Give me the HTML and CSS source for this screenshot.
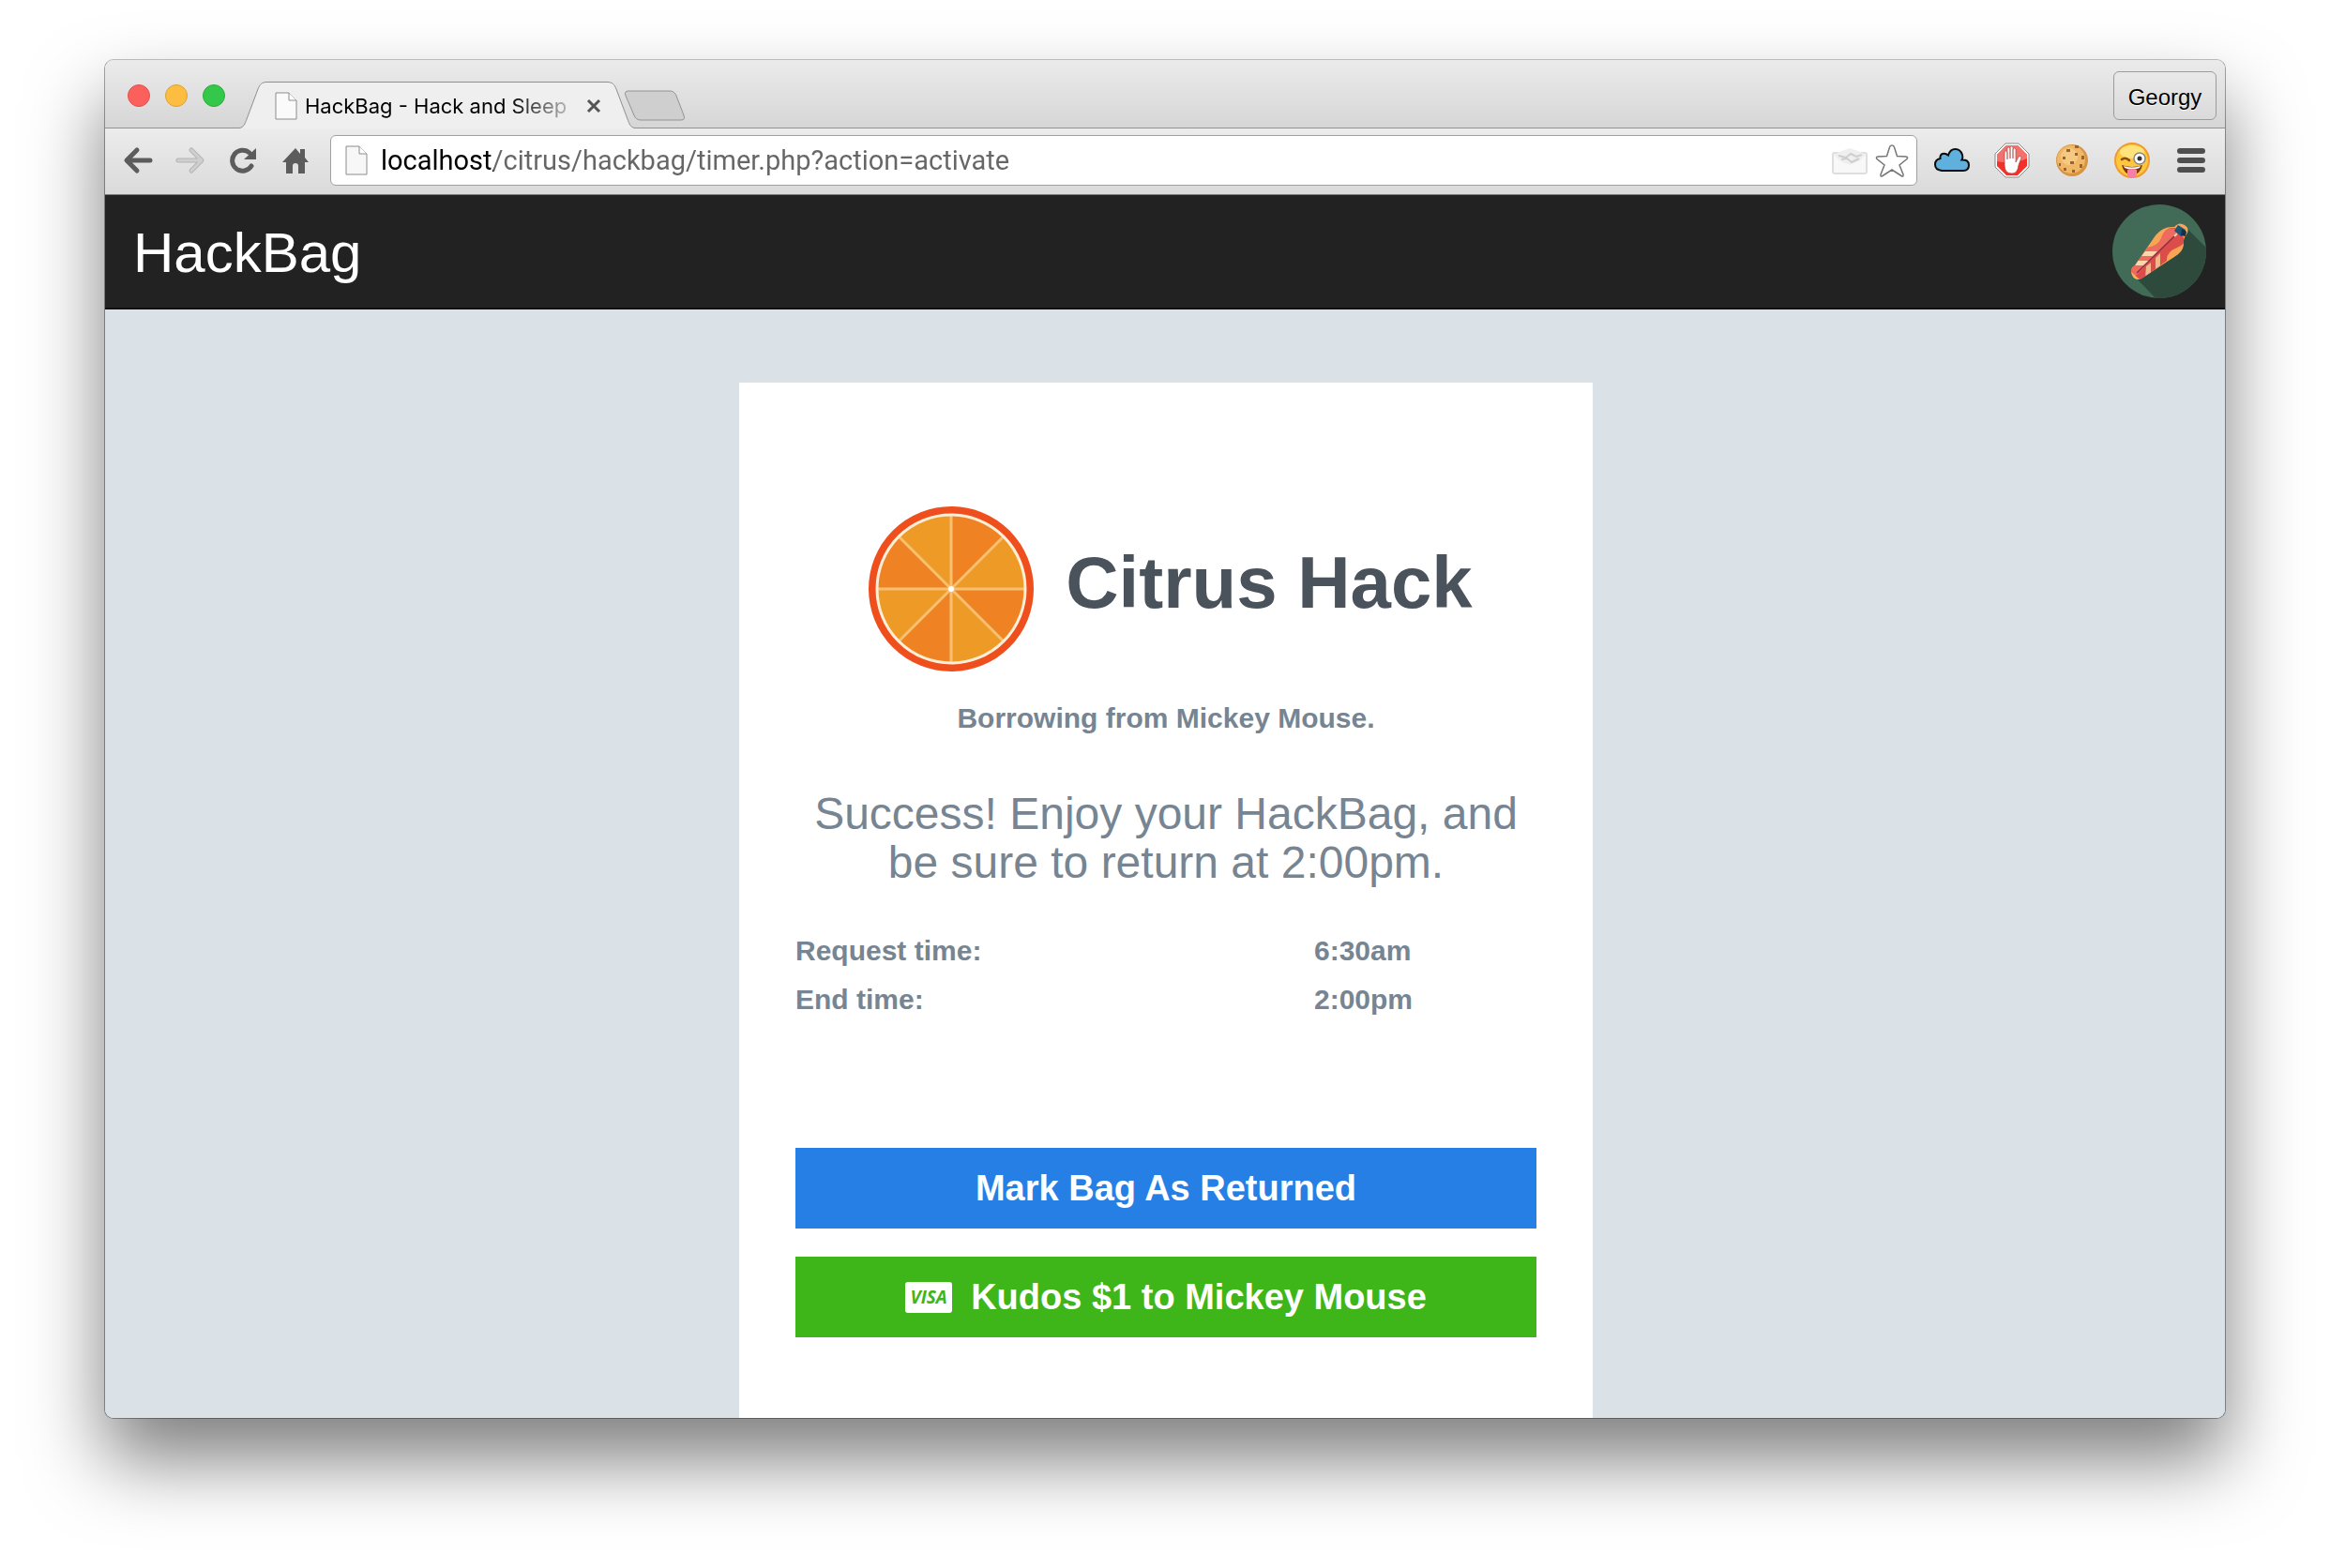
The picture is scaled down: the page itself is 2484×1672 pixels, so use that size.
FILE: index.html
```html
<!doctype html>
<html lang="en">
<head>
  <meta charset="utf-8">
  <meta name="viewport" content="width=device-width,initial-scale=1">
  <title>HackBag - Hack and Sleep</title>
  <link rel="stylesheet" href="styles.css">
</head>
<body>
  <div class="window">

    <!-- tab strip -->
    <div class="tabstrip">
      <div class="lights">
        <button type="button" class="light red" aria-label="Close window"></button>
        <button type="button" class="light yellow" aria-label="Minimize window"></button>
        <button type="button" class="light green" aria-label="Zoom window"></button>
      </div>
      <div class="tab">
        <svg class="tab-edge" width="30" height="50" viewBox="0 0 30 50">
          <path d="M0 50 V49.500 C5 49 6 45 8 40 L20 8 C22 3 24 .5 30 .5 V50z" fill="#efefef"/>
          <path d="M0 49.500 C5 49 6 45 8 40 L20 8 C22 3 24 .5 30 .5" fill="none" stroke="#8f8f8f"/>
        </svg>
        <div class="tab-body">
          <svg width="24" height="30" viewBox="0 0 24 30">
            <path d="M1 1h14l8 8v20H1z" fill="#fafafa" stroke="#8c8c8c"/>
            <path d="M15 1v8h8" fill="#fff" stroke="#8c8c8c"/>
          </svg>
          <span class="tab-title">HackBag - Hack and Sleep</span>
          <button type="button" class="tab-close" aria-label="Close tab">
            <svg width="16" height="16" viewBox="0 0 16 16"><path d="M2 2l12 12M14 2L2 14" stroke="#555" stroke-width="3"/></svg>
          </button>
        </div>
        <svg class="tab-edge" width="30" height="50" viewBox="0 0 30 50">
          <path d="M30 50 V49.500 C25 49 24 45 22 40 L10 8 C8 3 6 .5 0 .5 V50z" fill="#efefef"/>
          <path d="M30 49.500 C25 49 24 45 22 40 L10 8 C8 3 6 .5 0 .5" fill="none" stroke="#8f8f8f"/>
        </svg>
      </div>
      <button type="button" class="new-tab" aria-label="New tab">
        <svg width="66" height="34" viewBox="0 0 66 34">
          <path d="M5 1H49Q54 1 56 6L64 27Q66 32 61 32H18Q13 32 11 27L2 6Q0 1 5 1z" fill="#cfcfcf" stroke="#929292"/>
        </svg>
      </button>
      <button type="button" class="profile">Georgy</button>
    </div>

    <!-- toolbar -->
    <div class="toolbar">
      <button type="button" class="tool" aria-label="Back">
        <svg width="32" height="30" viewBox="0 0 32 30"><path d="M15 4L4 15l11 11M5 15h24" fill="none" stroke="#5c5c5c" stroke-width="5" stroke-linecap="round" stroke-linejoin="round"/></svg>
      </button>
      <button type="button" class="tool" aria-label="Forward">
        <svg width="32" height="30" viewBox="0 0 32 30"><path d="M17 4l11 11-11 11M27 15H3" fill="none" stroke="#b4b4b4" stroke-width="5" stroke-linecap="round" stroke-linejoin="round"/><path d="M17 4l11 11-11 11M27 15H3" fill="none" stroke="#cfcfcf" stroke-width="3" stroke-linecap="round" stroke-linejoin="round"/></svg>
      </button>
      <button type="button" class="tool" aria-label="Reload">
        <svg width="32" height="30" viewBox="0 0 32 30"><path d="M25 21A11 11 0 1 1 23 7" fill="none" stroke="#5c5c5c" stroke-width="5" stroke-linecap="round"/><path d="M30 2V14H17z" fill="#5c5c5c"/></svg>
      </button>
      <button type="button" class="tool" aria-label="Home">
        <svg width="32" height="30" viewBox="0 0 32 30"><path d="M16 2l5 6V3h5v9l4 5h-4v12h-7v-8q0-3-3-3t-3 3v8H6V17H2z" fill="#5c5c5c"/></svg>
      </button>

      <div class="omnibox">
        <svg width="24" height="32" viewBox="0 0 24 32">
          <path d="M1 1h14l8 8v22H1z" fill="#f7f7f7" stroke="#8c8c8c"/>
          <path d="M15 1v8h8" fill="#fff" stroke="#8c8c8c"/>
        </svg>
        <input class="url" type="text" aria-label="Address" value="localhost/citrus/hackbag/timer.php?action=activate">
        <svg width="38" height="30" viewBox="0 0 38 30">
          <rect x="1" y="7" width="36" height="22" rx="2" fill="#f8f8f8" stroke="#dedede" stroke-width="2"/>
          <path d="M2 9l8-4 9-3 9 3 8 4-7 7-10 4-10-4z" fill="#efefef"/>
          <path d="M7 10l8 2 5-4 6 3 6-2M10 14l6-1 5 4 8-4" fill="none" stroke="#cecece" stroke-width="2"/>
        </svg>
        <svg width="36" height="36" viewBox="0 0 36 36">
          <path d="M18 2q2 0 2.500 2l3 9.500 9.500.5q2.500.5 1 2.500l-8 6.500 4 10q.5 3-2 1.500L18 28l-10 6.500q-2.500 1.500-2-1.500l4-10-8-6.500q-1.500-2 1-2.500l9.500-.5 3-9.500Q16 2 18 2z" fill="#fff" stroke="#777" stroke-width="1.500"/>
        </svg>
      </div>

      <div class="extensions">
        <button type="button" class="ext" aria-label="Cloud">
          <svg width="38" height="38" viewBox="0 0 38 38"><path d="M8 30Q1 29 1 23.500T6.500 17Q6 13 9 12T15 13.500Q17 7 22.500 7T30 13Q31 16 29.500 18.500Q37 18 37 24T31 30z" fill="#5fb0dc" stroke="#0a0a0a" stroke-width="2"/></svg>
        </button>
        <button type="button" class="ext" aria-label="Ad blocker">
          <svg width="38" height="38" viewBox="0 0 38 38">
            <path d="M12 1h14l11 11v14L26 37H12L1 26V12z" fill="#fff" stroke="#8a8a8a"/>
            <path d="M13 3h12l10 10v12L25 35H13L3 25V13z" fill="#f0322a"/>
            <path d="M13 3h12l10 10v4Q20 24 3 20v-7z" fill="#f4706a"/>
            <path d="M11 20V10q1.500-2 3 0v8V6q1.500-2 3 0v11V5q1.500-2 3 0v12V7q1.500-2 3 0v14l3-6q3-1 3 1l-3 8q-1 9-7 9-8 0-8-9z" fill="#fff" stroke="#a33" stroke-width=".6"/>
          </svg>
        </button>
        <button type="button" class="ext" aria-label="Cookies">
          <svg width="38" height="38" viewBox="0 0 38 38">
            <circle cx="19" cy="19" r="17" fill="#d99342"/>
            <circle cx="18" cy="18" r="15" fill="#efb766"/>
            <circle cx="16" cy="15" r="9" fill="#f6c983"/>
            <path d="M13 7h4v3h-4zM22 3h4v3h-4zM22 11h3v3h-3zM9 15h3v3H9zM17 20h4v3h-4zM29 14h3v4h-3zM27 23h3v4h-3zM10 27h3v3h-3zM19 29h3v3h-3zM5 22h2v3H5z" fill="#9a6431"/>
          </svg>
        </button>
        <button type="button" class="ext" aria-label="Emoji">
          <svg width="38" height="38" viewBox="0 0 38 38">
            <circle cx="19" cy="19" r="18" fill="#fdc63c" stroke="#f09a30" stroke-width="2"/>
            <ellipse cx="19" cy="10" rx="13" ry="7" fill="#fee27a"/>
            <path d="M8 18q4-3 8 1" fill="none" stroke="#8a4b12" stroke-width="2.500" stroke-linecap="round"/>
            <circle cx="27" cy="17" r="6" fill="#fff" stroke="#8a8a8a" stroke-width="1.500"/>
            <circle cx="27" cy="17" r="2.500" fill="#333"/>
            <path d="M8 24q11 4 22 0-2 10-11 10T8 24z" fill="#7d3510"/>
            <path d="M10 25q9 3 18 0l-1 2q-8 3-16 0z" fill="#fff"/>
            <path d="M14 29q5-2 10 0v5q-1 4-5 4t-5-4z" fill="#f77fa4"/>
          </svg>
        </button>
        <button type="button" class="ext" aria-label="Menu">
          <svg width="34" height="38" viewBox="0 0 34 38"><path d="M6 9h24M6 19h24M6 29h24" stroke="#4f4f4f" stroke-width="6" stroke-linecap="round"/></svg>
        </button>
      </div>
    </div>

    <!-- site header -->
    <header class="navbar">
      <a class="brand" href="#">HackBag</a>
      <a class="bag-link" href="#" aria-label="Home page">
        <svg width="100" height="100" viewBox="0 0 100 100">
          <defs>
            <clipPath id="disc"><circle cx="50" cy="50" r="50"/></clipPath>
            <clipPath id="bag"><path d="M66 24Q71 18 77 22T79 32Q75 37 76 43Q75 51 66 56L31 79Q24 82 21 75T24 65L46 33Q54 23 66 24z"/></clipPath>
          </defs>
          <g clip-path="url(#disc)">
            <rect width="100" height="100" fill="#416b57"/>
            <path d="M78 24L110 56V120H65L24 77z" fill="#2d4a3d"/>
          </g>
          <g clip-path="url(#bag)">
            <rect width="100" height="100" fill="#f9a555"/>
            <path d="M67 25Q56 24 53 34T38 46L18 72l10 10 30-22Q57 51 69 46T75 34z" fill="#dc4c4a"/>
            <path d="M67 26Q56 24 53 34T38 46L18 72l6 5L68 32z" fill="#ee6b5f"/>
            <path d="M35 50h13l-5 5H31zM27 60h12l-5 5H24z" fill="#fbd5ab"/>
            <path d="M46 57l5-5v13l-5 4zM36 66l5-4v12l-6 4z" fill="#f5b58b"/>
            <path d="M26 73L67 33" stroke="#8c3040" stroke-width="1.500"/>
            <path d="M20 72l9 8-6 3-5-6z" fill="#fdb25a"/>
            <path d="M70 22l8 5v5l-5 2-7-6z" fill="#1b5876"/>
            <path d="M74 26l5 3-1 5-5-1z" fill="#10314f"/>
          </g>
          <path d="M66 34l3-3" stroke="#f4cdb0" stroke-width="2"/>
        </svg>
      </a>
    </header>

    <!-- page -->
    <main class="page">
      <section class="card">
        <div class="event">
          <svg width="176" height="176" viewBox="0 0 176 176">
            <circle cx="88" cy="88" r="84" fill="#ee9a26" stroke="#ee4f1c" stroke-width="8"/>
            <path d="M88 88V9A79 79 0 0 1 144 32zM88 88H167A79 79 0 0 1 144 144zM88 88V167A79 79 0 0 1 32 144zM88 88H9A79 79 0 0 1 32 32z" fill="#ef8324"/>
            <path d="M88 9V167M9 88H167M32 32L144 144M144 32L32 144" stroke="#f8c070" stroke-width="3"/>
            <circle cx="88" cy="88" r="79" fill="none" stroke="#fdeed8" stroke-width="3"/>
            <circle cx="88" cy="88" r="3" fill="#fff"/>
          </svg>
          <h1>Citrus Hack</h1>
        </div>
        <p class="lender">Borrowing from Mickey Mouse.</p>
        <p class="message">Success! Enjoy your HackBag, and be sure to return at 2:00pm.</p>
        <table class="times">
          <tr><th scope="row">Request time:</th><td>6:30am</td></tr>
          <tr><th scope="row">End time:</th><td>2:00pm</td></tr>
        </table>
        <form class="actions">
          <button type="button" class="btn blue">Mark Bag As Returned</button>
          <button type="button" class="btn green">
            <span class="visa">VISA</span>
            Kudos $1 to Mickey Mouse
          </button>
        </form>
      </section>
    </main>
  </div>
</body>
</html>
```
FILE: styles.css
```css
:root{--ink:#4a525c;--muted:#778592;--blue:#267fe4;--green:#3eb518;--page:#dae2e8}
*{box-sizing:border-box}
body{margin:0;min-height:100vh;padding:63px 111px 159px;display:flex;background:#fff;font-family:"Liberation Sans",Arial,Helvetica,sans-serif}
button{border:0;padding:0;background:none;font-family:inherit;cursor:pointer}
svg{display:block;flex:none}
a{text-decoration:none}

.window{flex:1;display:flex;flex-direction:column;min-width:0;border:1px solid rgba(0,0,0,.35);border-top-color:#b9b9b9;border-radius:10px;overflow:hidden;background:var(--page);background-clip:padding-box;box-shadow:0 44px 80px rgba(0,0,0,.5)}

/* tab strip */
.tabstrip{display:flex;height:73px;padding:0 9px 0 24px;background:linear-gradient(#ebebeb,#d6d6d6);border-bottom:1px solid #929292}
.lights{display:flex;gap:16px;align-items:center;padding-top:4px;margin-right:15px}
.light{width:24px;height:24px;border-radius:50%}
.red{background:#fc605c;border:1px solid #e2504b}
.yellow{background:#fdbd41;border:1px solid #dfa034}
.green.light{background:#34c84a;border:1px solid #2bac3a}
.tab{display:flex;height:50px;margin-top:23px;position:relative}
.tab-body{display:flex;align-items:center;width:362px;height:50px;padding-left:8px;border-top:1px solid #8f8f8f;background:#efefef}
.tab-title{flex:none;margin-left:8px;white-space:nowrap;font:22px/30px Inter,sans-serif;color:#000;-webkit-mask-image:linear-gradient(90deg,#000 78%,rgba(0,0,0,.25));mask-image:linear-gradient(90deg,#000 78%,rgba(0,0,0,.25))}
.tab-close{margin:0 6px 0 auto}
.new-tab{align-self:flex-start;margin:32px 0 0 -12px}
.profile{align-self:flex-start;width:110px;height:52px;margin:12px 0 0 auto;padding-top:4px;border:1px solid #9b9b9b;border-radius:6px;background:linear-gradient(#e9e9e9,#dadada);font-size:24px;color:#000;text-shadow:0 1px 0 #fff}

/* toolbar */
.toolbar{display:flex;align-items:center;height:71px;padding:0 20px 2px 19px;background:linear-gradient(#ececec,#dadada);border-bottom:1px solid #7d7d7d}
.tool{margin-right:24px}
.tool:nth-of-type(4){margin-right:21px}
.omnibox{flex:1;display:flex;align-items:center;height:54px;padding:0 8px 0 15px;border:1px solid #a0a0a0;border-radius:6px;background:#fff}
.url{flex:1;min-width:0;margin:0 8px 0 14px;padding:0;border:0;outline:0;font:29px/40px Roboto,sans-serif;color:transparent;background:linear-gradient(90deg,#000 120px,#666 120px);-webkit-background-clip:text;background-clip:text}
.omnibox svg + svg{margin-left:8px}
.extensions{display:flex;align-items:center;gap:26px;margin-left:18px}

/* site header */
.navbar{display:flex;align-items:center;justify-content:space-between;height:122px;padding:0 20px 0 30px;background:#222;border-bottom:2px solid #111}
.brand{padding-top:4px;font-size:60px;line-height:72px;color:#fff}

/* page */
.page{flex:1;display:flex;justify-content:center;padding:78px 0 0 2px;background:var(--page)}
.card{width:100%;max-width:910px;padding:132px 60px 84px;background:#fff;color:var(--muted)}
.event{display:flex;align-items:center;justify-content:center;gap:34px;padding-left:10px}
h1{margin:0;padding-bottom:14px;font-size:78px;line-height:90px;color:var(--ink)}
p{margin:0;text-align:center;line-height:52px}
.lender{margin-top:24px;font-size:30px;font-weight:bold}
.message{margin-top:50px;font-size:48px}
.times{width:100%;margin-top:42px;border-collapse:collapse;font-size:30px;line-height:52px;font-weight:bold;text-align:left}
.times th{width:70%;padding:0}
.times td{padding:0}
.actions{display:flex;flex-direction:column;gap:30px;margin-top:132px}
.btn{display:flex;align-items:center;justify-content:center;gap:20px;height:86px;font-size:38px;font-weight:bold;color:#fff}
.blue{background:var(--blue)}
.green{background:var(--green)}
.visa{width:50px;height:33px;border-radius:3px;background:#fff;color:var(--green);font:italic bold 19px/33px "Open Sans",sans-serif;text-align:center}
```
